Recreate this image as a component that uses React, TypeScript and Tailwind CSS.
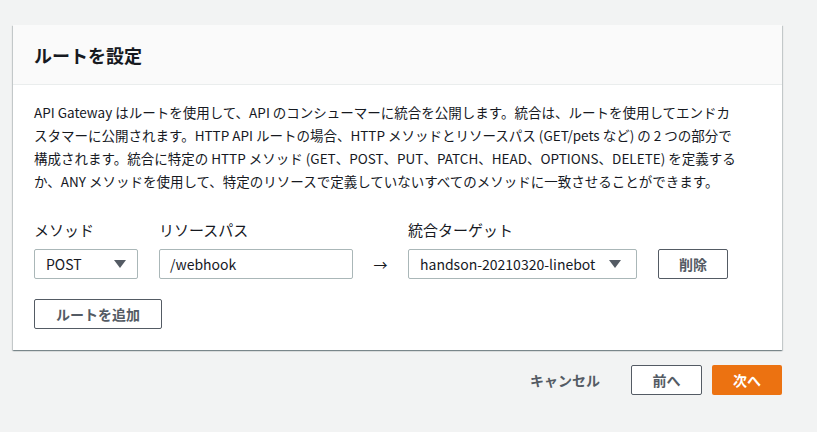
const Caret = () => (
  <svg width="12" height="8" viewBox="0 0 12 8" className="shrink-0">
    <path d="M0 0 L12 0 L6 8 Z" fill="#545b64" />
  </svg>
);

const App = () => {
  return (
    <div
      className="min-h-[432px] bg-[#f2f3f3] pt-[25px] text-[#16191f]"
      style={{ fontFamily: '"Noto Sans CJK JP", "Noto Sans", sans-serif' }}
    >
      <div className="ml-[13px] w-[769px] bg-white shadow-[0_1px_1px_0_rgba(0,28,36,0.3),1px_1px_1px_0_rgba(0,28,36,0.15),-1px_1px_1px_0_rgba(0,28,36,0.15)]">
        <div className="flex h-[60px] items-center border-b border-[#eaeded] bg-[#fafafa] px-[21px]">
          <h2 className="text-[18px] font-bold leading-none">ルートを設定</h2>
        </div>
        <div className="px-[21px] pt-[16px] pb-[21px]">
          <p className="whitespace-nowrap text-[13.5px] leading-[23px]">
            API Gateway はルートを使用して、API のコンシューマーに統合を公開します。統合は、ルートを使用してエンドカ
            <br />
            スタマーに公開されます。HTTP API ルートの場合、HTTP メソッドとリソースパス (GET/pets など) の 2 つの部分で
            <br />
            構成されます。統合に特定の HTTP メソッド (GET、POST、PUT、PATCH、HEAD、OPTIONS、DELETE) を定義する
            <br />
            か、ANY メソッドを使用して、特定のリソースで定義していないすべてのメソッドに一致させることができます。
          </p>

          <div className="mt-[27px] flex items-end">
            <div className="w-[104px]">
              <div className="mb-[9px] text-[15px] leading-[20px]">メソッド</div>
              <div className="flex h-[30px] items-center justify-between rounded-[2px] border border-[#aab7b8] pl-[11px] pr-[11px] text-[14px]">
                <span>POST</span>
                <Caret />
              </div>
            </div>
            <div className="ml-[21px] w-[194px]">
              <div className="mb-[9px] text-[15px] leading-[20px]">リソースパス</div>
              <div className="flex h-[30px] items-center rounded-[2px] border border-[#aab7b8] px-[10px] text-[14px]">
                /webhook
              </div>
            </div>
            <div className="flex h-[30px] w-[55px] items-center justify-center text-[14px]">→</div>
            <div className="w-[229px]">
              <div className="mb-[9px] text-[15px] leading-[20px]">統合ターゲット</div>
              <div className="flex h-[30px] items-center justify-between rounded-[2px] border border-[#aab7b8] pl-[11px] pr-[15px] text-[14px]">
                <span>handson-20210320-linebot</span>
                <Caret />
              </div>
            </div>
            <button className="ml-[21px] h-[30px] w-[70px] rounded-[2px] border border-[#545b64] text-[14px] font-bold text-[#545b64]">
              削除
            </button>
          </div>

          <button className="mt-[20px] h-[30px] w-[128px] rounded-[2px] border border-[#545b64] text-[14px] font-bold text-[#545b64]">
            ルートを追加
          </button>
        </div>
      </div>

      <div className="mt-[15px] flex w-[782px] items-center justify-end">
        <button className="h-[30px] px-[10px] text-[14px] font-bold text-[#545b64]">キャンセル</button>
        <button className="ml-[21px] h-[30px] w-[71px] rounded-[2px] border border-[#545b64] bg-white text-[14px] font-bold text-[#545b64]">
          前へ
        </button>
        <button className="ml-[10px] h-[30px] w-[70px] rounded-[2px] bg-[#ec7211] text-[14px] font-bold text-white">
          次へ
        </button>
      </div>
    </div>
  );
};

export default App;
